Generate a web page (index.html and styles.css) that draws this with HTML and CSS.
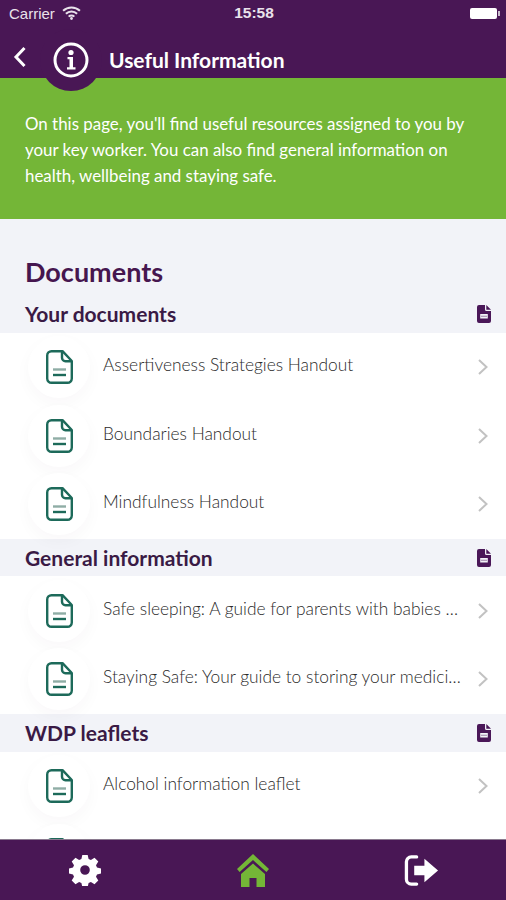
FILE: index.html
```html
<!DOCTYPE html>
<html lang="en">
<head>
<meta charset="utf-8">
<title>Useful Information</title>
<link rel="stylesheet" href="styles.css">
</head>
<body>
<svg class="defs" width="0" height="0" aria-hidden="true">
  <symbol id="doc" viewBox="0 0 27 34">
    <path d="M6 1.2h10.5L25.8 11v17.5a4.3 4.3 0 0 1-4.3 4.3H5.500a4.300 4.300 0 0 1-4.300-4.300V5.500A4.300 4.300 0 0 1 5.500 1.200z" fill="none" stroke="currentColor" stroke-width="2.400" stroke-linejoin="round"/>
    <path d="M16 1.500v6.300a3.400 3.400 0 0 0 3.400 3.400h6.200" fill="none" stroke="currentColor" stroke-width="2.400"/>
    <path d="M7 19.500h13" stroke="#8fada5" stroke-width="2.400"/>
    <path d="M7 25h13" stroke="currentColor" stroke-width="2.400"/>
  </symbol>
  <symbol id="chev" viewBox="0 0 12 18">
    <path d="M2 2l7.500 7L2 16" fill="none" stroke="currentColor" stroke-width="2"/>
  </symbol>
  <symbol id="file" viewBox="0 0 14 18">
    <path d="M2 0h6v4.500a1.500 1.500 0 0 0 1.500 1.500H14v10a2 2 0 0 1-2 2H2a2 2 0 0 1-2-2V2a2 2 0 0 1 2-2zM9.300 0L14 4.700H9.300zM3.200 9v4.500h7.600V9z" fill="currentColor" fill-rule="evenodd"/>
    <path d="M4 11.250h6" stroke="currentColor" stroke-width="1" opacity="0.5"/>
  </symbol>
</svg>

<header class="top">
  <div class="status">
    <div class="status-left">
      <span>Carrier</span>
      <svg class="wifi" viewBox="0 0 20 15"><path d="M1 5.200a13 13 0 0 1 18 0M4 8.400a8.600 8.600 0 0 1 12 0M7 11.400a4.200 4.200 0 0 1 6 0" fill="none" stroke="currentColor" stroke-width="2.200"/><circle cx="10" cy="13.400" r="1.500" fill="currentColor"/></svg>
    </div>
    <span class="clock">15:58</span>
    <div class="battery"><span class="battery-cap"></span></div>
  </div>
  <div class="title-bar">
    <svg class="back" viewBox="0 0 14 22"><path d="M11.500 2L3 11l8.500 9" fill="none" stroke="currentColor" stroke-width="3"/></svg>
    <span class="title">Useful Information</span>
    <div class="badge">
      <svg viewBox="0 0 36 36" class="badge-icon">
        <circle cx="18" cy="18" r="16" fill="none" stroke="currentColor" stroke-width="3"/>
        <circle cx="18" cy="10.500" r="2.600" fill="currentColor"/>
        <path d="M14.500 15h5.500v10.200h2.500v2.300h-8.500v-2.300h2.500v-7.900h-2z" fill="currentColor"/>
      </svg>
    </div>
  </div>
</header>

<section class="intro">
  <p>On this page, you'll find useful resources assigned to you by your key worker. You can also find general information on health, wellbeing and staying safe.</p>
</section>

<main class="content">
  <h1>Documents</h1>

  <div class="group-head"><h2>Your documents</h2><svg class="group-icon"><use href="#file"/></svg></div>
  <ul class="list">
    <li class="row"><span class="disc"><svg class="doc"><use href="#doc"/></svg></span><span class="label">Assertiveness Strategies Handout</span><svg class="chev"><use href="#chev"/></svg></li>
    <li class="row"><span class="disc"><svg class="doc"><use href="#doc"/></svg></span><span class="label">Boundaries Handout</span><svg class="chev"><use href="#chev"/></svg></li>
    <li class="row"><span class="disc"><svg class="doc"><use href="#doc"/></svg></span><span class="label">Mindfulness Handout</span><svg class="chev"><use href="#chev"/></svg></li>
  </ul>

  <div class="group-head"><h2>General information</h2><svg class="group-icon"><use href="#file"/></svg></div>
  <ul class="list">
    <li class="row"><span class="disc"><svg class="doc"><use href="#doc"/></svg></span><span class="label">Safe sleeping: A guide for parents with babies and young children</span><svg class="chev"><use href="#chev"/></svg></li>
    <li class="row"><span class="disc"><svg class="doc"><use href="#doc"/></svg></span><span class="label">Staying Safe: Your guide to storing your medicines safely</span><svg class="chev"><use href="#chev"/></svg></li>
  </ul>

  <div class="group-head"><h2>WDP leaflets</h2><svg class="group-icon"><use href="#file"/></svg></div>
  <ul class="list">
    <li class="row"><span class="disc"><svg class="doc"><use href="#doc"/></svg></span><span class="label">Alcohol information leaflet</span><svg class="chev"><use href="#chev"/></svg></li>
    <li class="row"><span class="disc"><svg class="doc"><use href="#doc"/></svg></span></li>
  </ul>
</main>

<nav class="tabs">
  <svg class="tab tab-gear" viewBox="0 0 32 32"><path fill-rule="evenodd" d="M13.300 1h5.400l.9 4.100 2.300 1 3.600-2.300 3.800 3.800-2.300 3.600 1 2.300 4 .9v5.200l-4 .9-1 2.300 2.300 3.600-3.800 3.800-3.600-2.300-2.300 1-.9 4h-5.400l-.9-4-2.300-1-3.600 2.300-3.800-3.800 2.300-3.600-1-2.300-4-.9v-5.200l4-.9 1-2.300-2.300-3.600 3.800-3.800 3.600 2.300 2.300-1zM16 11.200a4.800 4.800 0 1 0 0 9.600 4.800 4.800 0 0 0 0-9.600z" fill="currentColor"/></svg>
  <svg class="tab tab-home" viewBox="0 0 32 33"><path d="M16 0L32 15l-2.600 3L16 6 2.600 18 0 15z" fill="currentColor"/><path d="M16 9.500L28 20v13h-8.500v-9h-7v9H4V20z" fill="currentColor"/></svg>
  <svg class="tab tab-exit" viewBox="0 0 36 33"><path d="M13 2.500H7.500a5 5 0 0 0-5 5v18a5 5 0 0 0 5 5H13" fill="none" stroke="currentColor" stroke-width="3.400" stroke-linecap="round"/><path d="M21 4.500L35 16.500 21 28.500v-7H10.500v-10H21z" fill="currentColor"/></svg>
</nav>
</body>
</html>
```
FILE: styles.css
```css
* { box-sizing: border-box; margin: 0; padding: 0; }
html, body { height: 100%; }
body {
  width: 506px;
  height: 900px;
  display: flex;
  flex-direction: column;
  overflow: hidden;
  font-family: Lato, "Open Sans", sans-serif;
  background: #f2f3f8;
  color: #46164f;
}
.defs { position: absolute; }
.top { background: #491755; color: #fff; height: 78px; flex: none; display: flex; flex-direction: column; }
.status {
  height: 26px;
  padding: 0 7px 0 9px;
  display: grid;
  grid-template-columns: 1fr auto 1fr;
  align-items: center;
  font-family: "Liberation Sans", sans-serif;
  font-size: 15px;
  color: #e9e2eb;
}
.status-left { display: flex; align-items: center; gap: 7px; }
.wifi { width: 19px; height: 14px; margin-top: -1px; }
.clock { font-weight: 700; font-size: 15.500px; }
.battery {
  justify-self: end;
  width: 27px;
  height: 11px;
  margin-right: 2px;
  background: #fff;
  border-radius: 2px;
  position: relative;
}
.battery-cap {
  position: absolute;
  right: -3px;
  top: 3px;
  width: 2px;
  height: 5px;
  background: #c9bccd;
}
.title-bar { flex: 1; display: flex; align-items: center; position: relative; padding: 14px 0 0 13px; }
.back { width: 14px; height: 22px; margin-top: -4px; }
.title { margin-left: 82px; font-size: 21px; font-weight: 700; }
.badge {
  position: absolute;
  left: 40px;
  top: 3px;
  width: 62px;
  height: 62px;
  border-radius: 50%;
  background: #491755;
  display: flex;
  align-items: center;
  justify-content: center;
  z-index: 2;
}
.badge-icon { width: 36px; height: 36px; }
.intro {
  background: #74b637;
  height: 141px;
  flex: none;
  padding: 33px 25px 0;
  color: #fff;
  font-size: 16.900px;
  line-height: 26px;
}
.content { flex: 1; min-height: 0; overflow: hidden; padding-top: 35px; }
h1 { font-size: 27px; font-weight: 700; line-height: 36px; padding-left: 25px; margin-bottom: 5px; color: #46164f; }
.group-head {
  height: 37.700px;
  padding: 0 15px 0 25px;
  display: flex;
  align-items: center;
  justify-content: space-between;
}
h2 { font-size: 21px; font-weight: 700; color: #3a1a45; }
.group-icon { width: 14px; height: 18px; color: #4a1758; }
.list { list-style: none; background: #fff; }
.row {
  height: 68.700px;
  padding-left: 28px;
  padding-right: 17px;
  display: flex;
  align-items: center;
}
.disc {
  width: 62px;
  height: 62px;
  flex: none;
  border-radius: 50%;
  background: #fff;
  box-shadow: 0 6px 16px rgba(60, 40, 70, 0.030);
  display: flex;
  align-items: center;
  justify-content: center;
  color: #1d6a5a;
}
.doc { width: 27px; height: 34px; }
.label {
  flex: 1;
  min-width: 0;
  margin: -5px 16px 0 13px;
  font-size: 17.350px;
  font-weight: 300;
  color: #2a2a2a;
  white-space: nowrap;
  overflow: hidden;
  text-overflow: ellipsis;
}
.chev { width: 12px; height: 18px; flex: none; color: #c2c2c2; }
.tabs {
  height: 61px;
  flex: none;
  position: relative;
  background: #491755;
  border-top: 1px solid #8a7a8f;
  display: flex;
  align-items: center;
  justify-content: space-between;
  padding: 0 67px 0 69px;
}
.tab { display: block; }
.tab-gear { width: 32px; height: 32px; color: #fff; }
.tab-home { width: 32px; height: 33px; color: #74b637; }
.tab-exit { width: 35px; height: 33px; color: #fff; }
```
